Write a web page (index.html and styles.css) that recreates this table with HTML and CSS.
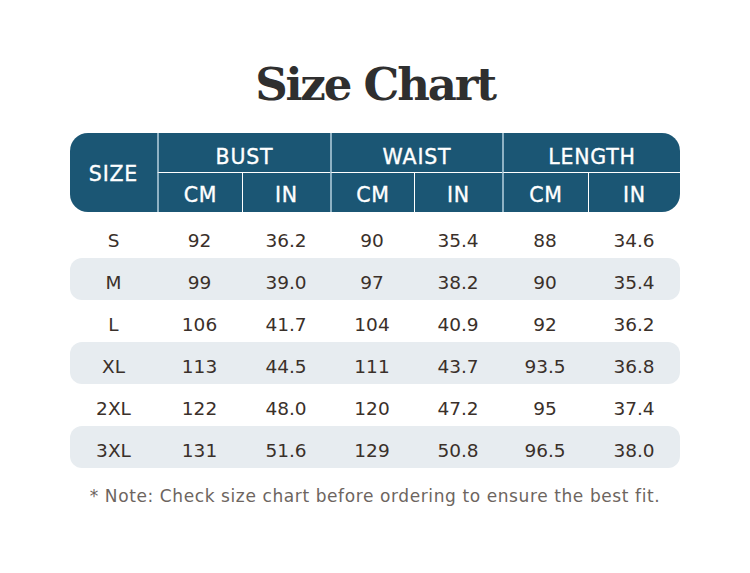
FILE: index.html
```html
<!DOCTYPE html>
<html lang="en">
<head>
<meta charset="utf-8">
<title>Size Chart</title>
<link rel="stylesheet" href="styles.css">
</head>
<body>
<main class="page">
  <h1 class="title">Size Chart</h1>
  <div class="chart">
    <div class="head">
      <div class="h-size">SIZE</div>
      <div class="h-group g-bust">BUST</div>
      <div class="h-group g-waist">WAIST</div>
      <div class="h-group g-length">LENGTH</div>
      <div class="h-sub s1 gl">CM</div>
      <div class="h-sub s2">IN</div>
      <div class="h-sub s3 gl">CM</div>
      <div class="h-sub s4">IN</div>
      <div class="h-sub s5 gl">CM</div>
      <div class="h-sub s6">IN</div>
    </div>
    <div class="body">
      <div class="row"><span>S</span><span>92</span><span>36.2</span><span>90</span><span>35.4</span><span>88</span><span>34.6</span></div>
      <div class="row alt"><span>M</span><span>99</span><span>39.0</span><span>97</span><span>38.2</span><span>90</span><span>35.4</span></div>
      <div class="row"><span>L</span><span>106</span><span>41.7</span><span>104</span><span>40.9</span><span>92</span><span>36.2</span></div>
      <div class="row alt"><span>XL</span><span>113</span><span>44.5</span><span>111</span><span>43.7</span><span>93.5</span><span>36.8</span></div>
      <div class="row"><span>2XL</span><span>122</span><span>48.0</span><span>120</span><span>47.2</span><span>95</span><span>37.4</span></div>
      <div class="row alt"><span>3XL</span><span>131</span><span>51.6</span><span>129</span><span>50.8</span><span>96.5</span><span>38.0</span></div>
    </div>
  </div>
  <p class="note">* Note: Check size chart before ordering to ensure the best fit.</p>
</main>
</body>
</html>
```
FILE: styles.css
```css
* { box-sizing: border-box; }
html, body { margin: 0; padding: 0; background: #ffffff; }
body { width: 750px; height: 573px; overflow: hidden; font-family: "DejaVu Sans", "Open Sans", sans-serif; }

.page {
  display: flex;
  flex-direction: column;
  align-items: center;
  padding-top: 57px;
}

.title {
  margin: 0;
  font-family: "DejaVu Serif", "Liberation Serif", serif;
  font-weight: 700;
  font-size: 45px;
  line-height: 56px;
  color: #2f2f2f;
  letter-spacing: -2.2px;
}

.chart {
  width: 610px;
  margin-top: 20px;
}

.head {
  display: grid;
  grid-template-columns: 87px 85px 88px 84px 88px 86px 92px;
  grid-template-rows: 40px 39px;
  background: #1b5674;
  border-radius: 18px;
  overflow: hidden;
  color: #ffffff;
  font-size: 20.5px;
  letter-spacing: 0.8px;
  -webkit-text-stroke: 0.35px #ffffff;
}

.head > div {
  display: flex;
  align-items: center;
  justify-content: center;
}

.h-size { grid-column: 1; grid-row: 1 / span 2; padding-top: 3px; }
.h-group { grid-row: 1; border-left: 2px solid #8fb2c4; border-bottom: 1px solid #ffffff; padding-top: 8px; }
.g-bust { grid-column: 2 / span 2; }
.g-waist { grid-column: 4 / span 2; }
.g-length { grid-column: 6 / span 2; }
.h-sub { grid-row: 2; padding-top: 4px; }
.h-sub.gl { border-left: 2px solid #8fb2c4; }
.s2, .s4, .s6 { border-left: 1px solid #ffffff; }

.body {
  display: flex;
  flex-direction: column;
  padding-top: 4px;
}

.row {
  display: grid;
  grid-template-columns: 87px 85px 88px 84px 88px 86px 92px;
  height: 42px;
  align-items: center;
  border-radius: 12px;
  color: #3a302a;
  font-size: 18.5px;
}

.row span { text-align: center; padding-top: 6px; }
.row.alt { background: #e7ecf0; }

.note {
  margin: 18px 0 0;
  font-size: 17px;
  color: #6d6560;
  letter-spacing: 0.6px;
}
```
